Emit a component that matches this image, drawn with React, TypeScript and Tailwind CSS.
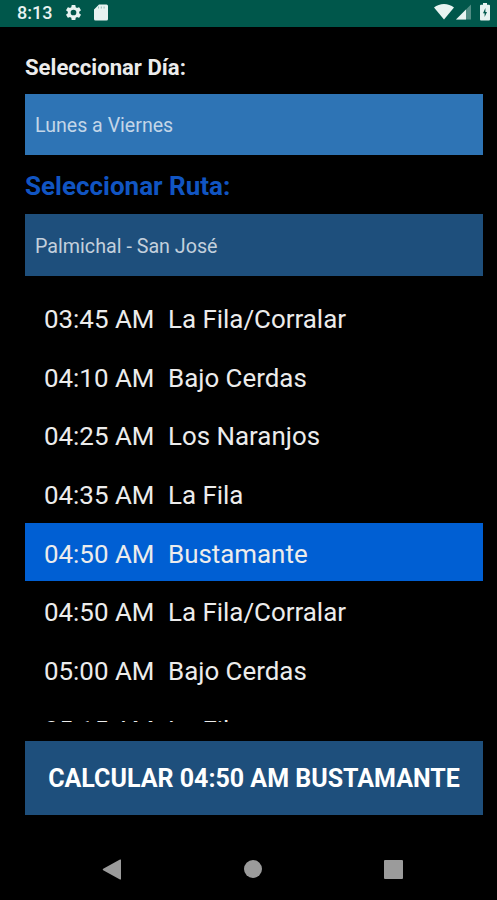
const departures = [
  { time: "03:45 AM", place: "La Fila/Corralar" },
  { time: "04:10 AM", place: "Bajo Cerdas" },
  { time: "04:25 AM", place: "Los Naranjos" },
  { time: "04:35 AM", place: "La Fila" },
  { time: "04:50 AM", place: "Bustamante", selected: true },
  { time: "04:50 AM", place: "La Fila/Corralar" },
  { time: "05:00 AM", place: "Bajo Cerdas" },
  { time: "05:15 AM", place: "La Fila" },
];

function StatusBar() {
  return (
    <div className="flex h-[27px] shrink-0 items-start bg-[#00574b] pl-[17px] pr-[7px] text-[#e8f3f1]">
      <span className="mt-[1px] w-[47px] whitespace-nowrap text-[18px] leading-[24px] font-medium">8:13</span>
      <svg className="mt-[3px] size-[19px]" viewBox="0 0 24 24" fill="currentColor">
        <path d="M19.14 12.94c.04-.3.06-.61.06-.94s-.02-.64-.07-.94l2.03-1.58a.49.49 0 0 0 .12-.61l-1.92-3.32a.49.49 0 0 0-.59-.22l-2.39.96a7 7 0 0 0-1.62-.94l-.36-2.54a.48.48 0 0 0-.48-.41h-3.84a.48.48 0 0 0-.47.41l-.36 2.54c-.59.24-1.13.57-1.62.94l-2.39-.96a.48.48 0 0 0-.59.22L2.73 8.87a.48.48 0 0 0 .12.61l2.03 1.58a6 6 0 0 0 0 1.88l-2.03 1.58a.49.49 0 0 0-.12.61l1.92 3.32c.12.22.37.29.59.22l2.39-.96c.5.38 1.03.7 1.62.94l.36 2.54c.05.24.24.41.48.41h3.84c.24 0 .44-.17.47-.41l.36-2.54a7 7 0 0 0 1.62-.94l2.39.96c.22.08.47 0 .59-.22l1.92-3.32a.48.48 0 0 0-.12-.61zM12 15.6a3.6 3.6 0 1 1 0-7.2 3.6 3.6 0 0 1 0 7.2z" />
      </svg>
      <svg className="mt-[4px] ml-[11px] h-[17px] w-[14px]" viewBox="0 0 14 17" fill="currentColor">
        <path d="M5 .5h7.5A1.5 1.5 0 0 1 14 2v13a1.5 1.5 0 0 1-1.5 1.5h-11A1.5 1.5 0 0 1 0 15V5.5z" />
        <path d="M4.500 2.500v2M7.300 2.500v2M10.100 2.500v2" fill="none" stroke="#00574b" strokeWidth="1" opacity=".35" />
      </svg>
      <svg className="mt-[3px] ml-auto h-[17px] w-[20px]" viewBox="0 0 20 17" fill="currentColor">
        <path d="M0 4.500C5.500-.3 14.500-.3 20 4.500L10 16.500z" />
      </svg>
      <svg className="mt-[4px] ml-[2px] h-[16px] w-[15px]" viewBox="0 0 15 16" fill="currentColor">
        <path d="M15 .5v15H0z" opacity=".35" />
        <path d="M10 5.500v10H0z" />
      </svg>
      <svg className="mt-[3px] ml-[9px] h-[18px] w-[10px]" viewBox="0 0 10 18" fill="currentColor">
        <path d="M3 0h4v1.800h2a1 1 0 0 1 1 1V16.500a1 1 0 0 1-1 1H1a1 1 0 0 1-1-1V2.800a1 1 0 0 1 1-1h2z" />
        <path d="M5.400 5L3 10.200h1.600v3.800L7 8.900H5.400z" fill="#00574b" />
      </svg>
    </div>
  );
}

function NavigationBar() {
  return (
    <div className="mt-auto flex h-[62px] items-center justify-between pl-[102px] pr-[94px] text-[#9b9b9b]">
      <svg className="h-[21px] w-[20px]" viewBox="0 0 20 21" fill="currentColor">
        <path d="M19 .8v19.400a.8.8 0 0 1-1 .2L1.200 11.300a1 1 0 0 1 0-1.600L18 .6a.8.8 0 0 1 1 .2z" />
      </svg>
      <div className="size-[18px] rounded-full bg-[#9b9b9b]" />
      <div className="size-[19px] rounded-[1px] bg-[#9b9b9b]" />
    </div>
  );
}

export default function App() {
  return (
    <div className="flex h-[900px] w-[497px] flex-col overflow-hidden bg-black font-['Roboto',sans-serif] text-[#ececec]">
      <StatusBar />
      <div className="flex flex-col pl-[25px] pr-[14px]">
        <p className="mt-[24px] h-[43px] text-[22.100px] leading-[32px] font-bold whitespace-nowrap">Seleccionar Día:</p>
        <div className="flex h-[61px] items-center bg-[#2e74b5] px-[10px] pt-[3px] text-[19.600px] text-[#c3d6e8]">
          Lunes a Viernes
        </div>
        <p className="h-[59px] pt-[15px] text-[26px] leading-[32px] font-bold whitespace-nowrap text-[#1155c2]">
          Seleccionar Ruta:
        </p>
        <div className="flex h-[62px] items-center bg-[#1e4f7c] px-[10px] pt-[4px] text-[19.700px] text-[#c3d0dc]">
          Palmichal - San José
        </div>
        <div className="mt-[12px] h-[434px] overflow-hidden">
          {departures.map((d) => (
            <div
              key={d.time + d.place}
              className={`flex h-[58.700px] items-center gap-[14px] px-[19px] pt-[4px] text-[25.900px] whitespace-nowrap ${
                d.selected ? "bg-[#005fd3]" : ""
              }`}
            >
              <span className="w-[110px]">{d.time}</span>
              <span>{d.place}</span>
            </div>
          ))}
        </div>
        <button className="mt-[19px] h-[74px] bg-[#1e4f7c] pt-[1px] text-[25px] font-bold whitespace-nowrap text-white">
          CALCULAR 04:50 AM BUSTAMANTE
        </button>
      </div>
      <NavigationBar />
    </div>
  );
}
